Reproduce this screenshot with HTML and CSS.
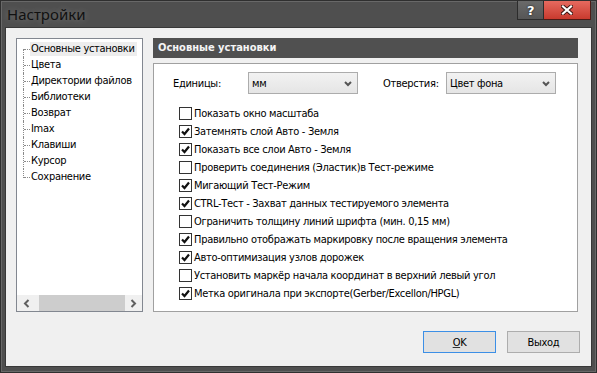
FILE: index.html
```html
<!DOCTYPE html>
<html lang="ru">
<head>
    <meta charset="UTF-8">
    <title>Настройки</title>
    <link rel="stylesheet" href="styles.css">
</head>
<body>

<div class="window">
    <!-- Virsraksta josla -->
    <div class="titlebar">
        <span class="title">Настройки</span>
        <div class="caption-buttons">
            <span class="cap-btn help">?</span>
            <span class="cap-btn close">
                <svg width="12" height="10" viewBox="0 0 12 10">
                    <path d="M2 1.5 L10 8.5 M10 1.5 L2 8.5" stroke="#3a1410" stroke-width="4" stroke-linecap="square"/>
                    <path d="M2 1.5 L10 8.5 M10 1.5 L2 8.5" stroke="#fff" stroke-width="2.2" stroke-linecap="square"/>
                </svg>
            </span>
        </div>
    </div>

    <div class="client">
        <div class="main">
            <!-- Koks ar sadaļām -->
            <div class="tree">
                <ul class="tree-list">
                    <li class="selected"><span class="branch"></span><span class="label">Основные установки</span></li>
                    <li><span class="branch"></span><span class="label">Цвета</span></li>
                    <li><span class="branch"></span><span class="label">Директории файлов</span></li>
                    <li><span class="branch"></span><span class="label">Библиотеки</span></li>
                    <li><span class="branch"></span><span class="label">Возврат</span></li>
                    <li><span class="branch"></span><span class="label">Imax</span></li>
                    <li><span class="branch"></span><span class="label">Клавиши</span></li>
                    <li><span class="branch"></span><span class="label">Курсор</span></li>
                    <li class="last"><span class="branch"></span><span class="label">Сохранение</span></li>
                </ul>
                <div class="hscroll">
                    <span class="arrow">
                        <svg width="7" height="9" viewBox="0 0 7 9"><path d="M5.5 1 L2 4.5 L5.5 8" stroke="#606060" stroke-width="2" fill="none"/></svg>
                    </span>
                    <span class="track"><span class="thumb"></span></span>
                    <span class="arrow">
                        <svg width="7" height="9" viewBox="0 0 7 9"><path d="M1.5 1 L5 4.5 L1.5 8" stroke="#606060" stroke-width="2" fill="none"/></svg>
                    </span>
                </div>
            </div>

            <!-- Lapa ar iestatījumiem -->
            <div class="page">
                <div class="page-header">Основные установки</div>
                <div class="page-body">
                    <div class="fields">
                        <span class="field-label units">Единицы:</span>
                        <div class="select">
                            <span>мм</span>
                            <svg width="8" height="6" viewBox="0 0 8 6"><path d="M1 1 L4 4 L7 1" stroke="#555" stroke-width="2" fill="none"/></svg>
                        </div>
                        <span class="field-label holes">Отверстия:</span>
                        <div class="select">
                            <span>Цвет фона</span>
                            <svg width="8" height="6" viewBox="0 0 8 6"><path d="M1 1 L4 4 L7 1" stroke="#555" stroke-width="2" fill="none"/></svg>
                        </div>
                    </div>

                    <ul class="checks">
                        <li><span class="box"></span>Показать окно масштаба</li>
                        <li><span class="box checked"></span>Затемнять слой Авто - Земля</li>
                        <li><span class="box checked"></span>Показать все слои Авто - Земля</li>
                        <li><span class="box"></span>Проверить соединения (Эластик)в Тест-режиме</li>
                        <li><span class="box checked"></span>Мигающий Тест-Режим</li>
                        <li><span class="box checked"></span>CTRL-Тест - Захват данных тестируемого элемента</li>
                        <li><span class="box"></span>Ограничить толщину линий шрифта (мин. 0,15 мм)</li>
                        <li><span class="box checked"></span>Правильно отображать маркировку после вращения элемента</li>
                        <li><span class="box checked"></span>Авто-оптимизация узлов дорожек</li>
                        <li><span class="box"></span>Установить маркёр начала координат в верхний левый угол</li>
                        <li><span class="box checked"></span>Метка оригинала при экспорте(Gerber/Excellon/HPGL)</li>
                    </ul>
                </div>
            </div>
        </div>

        <!-- Pogas -->
        <div class="buttons">
            <button class="btn default"><u>O</u>K</button>
            <button class="btn">Выход</button>
        </div>
    </div>
</div>

<script>
    // Atzīmju ielikšana izvēles rūtiņās
    document.querySelectorAll('.box.checked').forEach(function (box) {
        box.innerHTML = '<svg width="11" height="11" viewBox="0 0 11 11"><path d="M2 5.5 L4.5 8 L9 2.5" stroke="#111" stroke-width="2.2" fill="none"/></svg>';
    });
</script>

</body>
</html>
```

FILE: styles.css
```css
/* Pamata iestatījumi */
body {
    margin: 0;
    font-family: "DejaVu Sans Condensed", "Liberation Sans", sans-serif;
    font-size: 11px;
    letter-spacing: -0.3px;
    color: #000;
}

ul {
    list-style: none;
    margin: 0;
    padding: 0;
}

/* Logs */
.window {
    width: 597px;
    height: 373px;
    box-sizing: border-box;
    background: #4f4f4f;
    border: 1px solid #2f2f2f;
    box-shadow: inset 0 0 0 1px #686868;
    display: flex;
    flex-direction: column;
}

.titlebar {
    height: 26px;
    display: flex;
    justify-content: space-between;
    align-items: flex-start;
}

.title {
    font-family: "Noto Sans", "Open Sans", sans-serif;
    font-size: 15px;
    letter-spacing: 0;
    color: #111;
    padding: 3px 0 0 6px;
    text-shadow: 0 0 6px rgba(255, 255, 255, 0.25);
}

.caption-buttons {
    display: flex;
    margin-right: 5px;
}

.cap-btn {
    height: 19px;
    box-sizing: border-box;
    display: flex;
    align-items: center;
    justify-content: center;
}

.help {
    width: 27px;
    background: linear-gradient(#6a6a6a, #565656);
    border: 1px solid #2c2c2c;
    border-top: none;
    color: #fff;
    font-family: "DejaVu Sans", sans-serif;
    font-weight: bold;
    font-size: 13px;
    text-shadow: 0 0 2px #000;
}

.close {
    width: 47px;
    background: linear-gradient(#e66a5f, #c83a2e);
    border: 1px solid #4e1a15;
    border-top: none;
    border-left: none;
}

/* Klienta laukums */
.client {
    flex: 1;
    margin: 0 4px 5px 4px;
    border: 1px solid #383838;
    background: #f0f0f0;
    padding: 10px 11px 0 10px;
}

.main {
    display: flex;
    gap: 10px;
    height: 274px;
    padding-right: 2px;
}

/* Koks */
.tree {
    width: 127px;
    box-sizing: border-box;
    border: 1px solid #828790;
    background: #fff;
    display: flex;
    flex-direction: column;
}

.tree-list {
    flex: 1;
    padding-top: 2px;
}

.tree-list li {
    display: flex;
    height: 16px;
    align-items: center;
}

.branch {
    align-self: stretch;
    width: 7px;
    margin-left: 6px;
    border-left: 1px dotted #8a8a8a;
    box-sizing: border-box;
    position: relative;
}

.branch::after {
    content: "";
    position: absolute;
    left: 0;
    right: 0;
    top: 8px;
    border-top: 1px dotted #8a8a8a;
}

.tree-list li:first-child .branch {
    align-self: flex-end;
    height: 8px;
}

.tree-list li:first-child .branch::after {
    top: 0;
}

.tree-list li.last .branch {
    align-self: flex-start;
    height: 9px;
}

.label {
    padding: 0 2px 0 1px;
    line-height: 14px;
    white-space: nowrap;
}

.selected .label {
    background: #ededed;
}

.hscroll {
    height: 16px;
    display: flex;
    background: #f0f0f0;
}

.hscroll .arrow {
    width: 18px;
    display: flex;
    align-items: center;
    justify-content: center;
}

.hscroll .arrow:last-child {
    width: 17px;
}

.track {
    flex: 1;
    display: flex;
    padding-left: 4px;
}

.thumb {
    flex: 1;
    background: #cdcdcd;
}

/* Iestatījumu lapa */
.page {
    flex: 1;
    display: flex;
    flex-direction: column;
    gap: 5px;
}

.page-header {
    height: 20px;
    background: #505050;
    color: #f4f4f4;
    font-weight: bold;
    font-size: 11px;
    letter-spacing: 0;
    line-height: 20px;
    padding-left: 5px;
}

.page-body {
    flex: 1;
    background: #fff;
    border: 1px solid #a0a0a0;
    padding: 8px 0 0 0;
}

.fields {
    display: flex;
    align-items: center;
    height: 22px;
    padding-left: 19px;
}

.field-label {
    width: 75px;
}

.field-label.holes {
    width: 63px;
    margin-left: 25px;
}

.select {
    width: 110px;
    height: 22px;
    box-sizing: border-box;
    border: 1px solid #acacac;
    background: linear-gradient(#f2f2f2, #e5e5e5);
    display: flex;
    align-items: center;
    justify-content: space-between;
    padding: 0 5px 0 3px;
}

.select svg {
    margin-top: 1px;
}

/* Izvēles rūtiņas */
.checks {
    margin-top: 10px;
    padding-left: 25px;
}

.checks li {
    height: 18px;
    display: flex;
    align-items: center;
    white-space: nowrap;
}

.box {
    width: 13px;
    height: 13px;
    box-sizing: border-box;
    border: 1px solid #333;
    background: #fff;
    margin-right: 2px;
    display: flex;
    align-items: center;
    justify-content: center;
}

/* Pogas */
.buttons {
    display: flex;
    justify-content: flex-end;
    gap: 11px;
    margin-top: 19px;
}

.btn {
    width: 73px;
    height: 22px;
    border: 1px solid #adadad;
    background: #e1e1e1;
    font-family: "DejaVu Sans Condensed", "Liberation Sans", sans-serif;
    font-size: 11px;
    letter-spacing: -0.3px;
    color: #000;
    padding: 0;
}

.btn.default {
    border-color: #3c8fe6;
}

.btn u {
    text-decoration-color: #333;
}
```
